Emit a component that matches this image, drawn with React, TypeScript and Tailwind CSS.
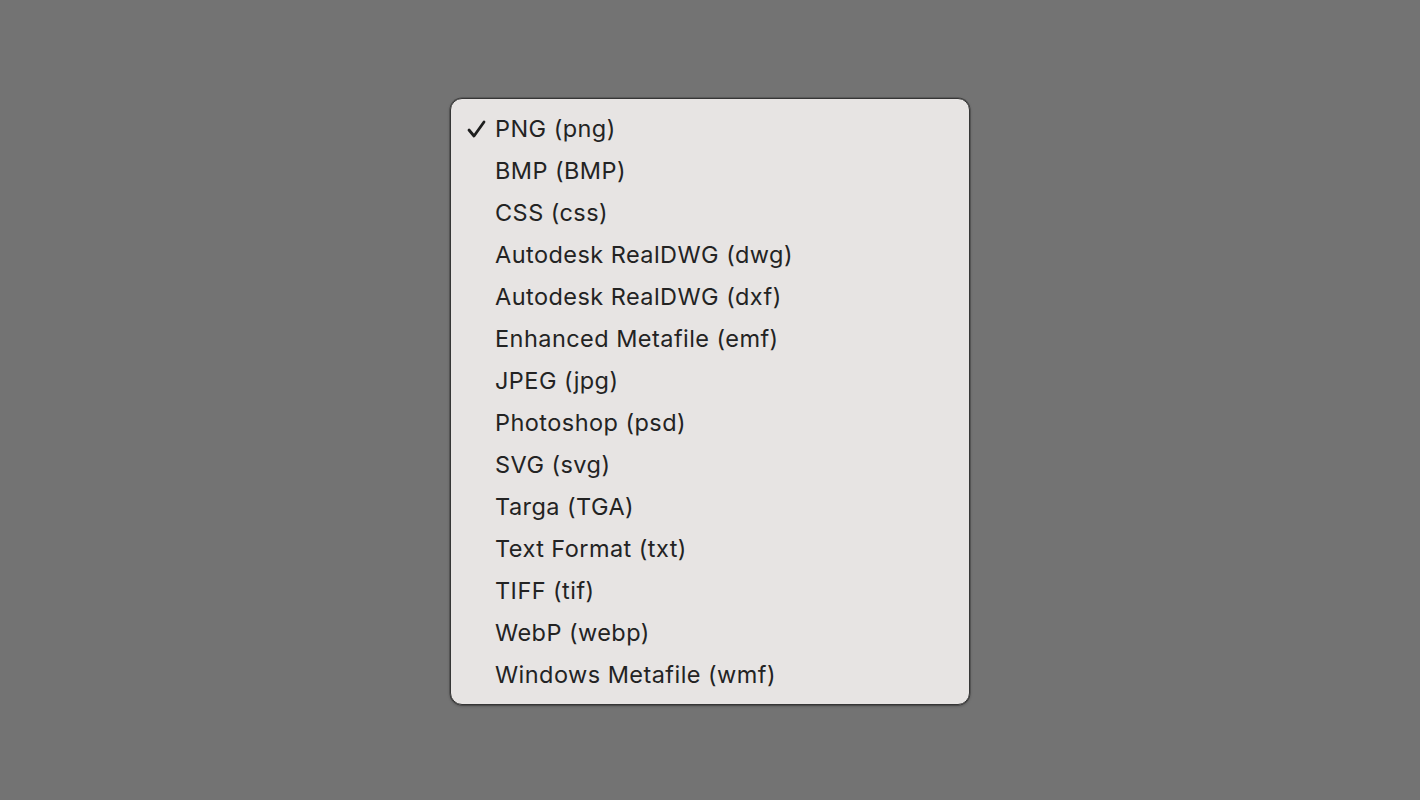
import React from 'react';

const formats = [
  'PNG (png)',
  'BMP (BMP)',
  'CSS (css)',
  'Autodesk RealDWG (dwg)',
  'Autodesk RealDWG (dxf)',
  'Enhanced Metafile (emf)',
  'JPEG (jpg)',
  'Photoshop (psd)',
  'SVG (svg)',
  'Targa (TGA)',
  'Text Format (txt)',
  'TIFF (tif)',
  'WebP (webp)',
  'Windows Metafile (wmf)',
];

const App: React.FC = () => {
  const selected = 0;

  return (
    <div className="w-[1420px] h-[800px] bg-[#737373] flex justify-center items-start pt-[98px]" style={{ fontFamily: 'Inter, "Noto Sans", sans-serif' }}>
      <div className="w-[520px] bg-[#e7e4e3] border border-[#363636] rounded-[12px] pt-[9px] pb-[8px] shadow-[0_0_0_0.5px_rgba(0,0,0,0.35),0_1px_3px_rgba(0,0,0,0.3)]">
        {formats.map((label, i) => (
          <div key={label} className="h-[42px] flex items-center text-[#232323] text-[23.5px] tracking-[0.45px]">
            <span className="w-[44px] flex justify-end pr-[9px]">
              {i === selected && (
                <svg width="19" height="18" viewBox="0 0 19 18" fill="none">
                  <path d="M2 10 L7 16 L17 2" stroke="#1f1f1f" strokeWidth="2.8" strokeLinecap="round" strokeLinejoin="round" />
                </svg>
              )}
            </span>
            <span>{label}</span>
          </div>
        ))}
      </div>
    </div>
  );
};

export default App;
